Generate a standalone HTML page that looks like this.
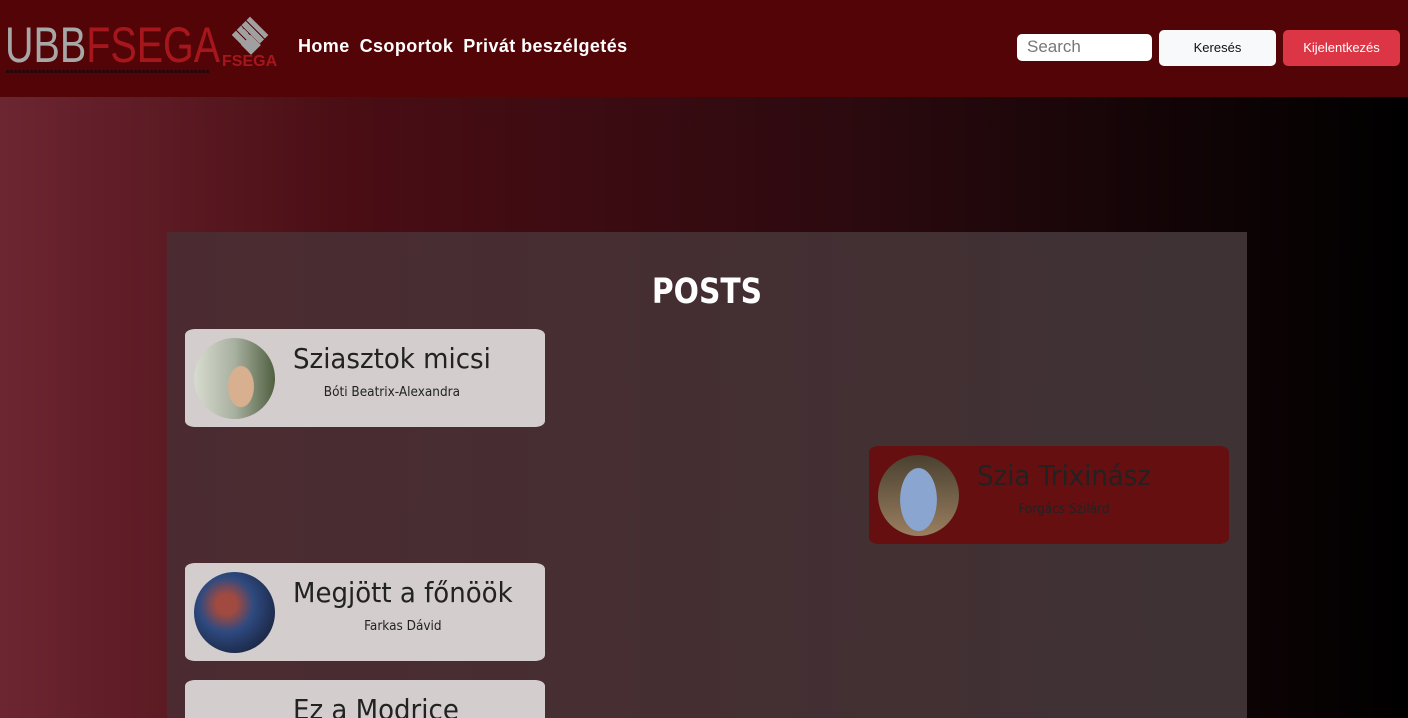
<!DOCTYPE html>
<html><head><meta charset="utf-8"><style>
*{margin:0;padding:0;box-sizing:border-box}
html,body{width:1408px;height:718px;overflow:hidden}
body{font-family:"Liberation Sans","DejaVu Sans",sans-serif;background:linear-gradient(90deg,#6c2631 0%,#4a0d14 25%,#2c0a0f 60%,#000 100%);position:relative}
.hdr{position:absolute;left:0;top:0;width:1408px;height:97px;background:#530406}
.logo{position:absolute;left:5px;top:17px;font-size:50px;white-space:nowrap;transform:scaleX(.79);transform-origin:left;line-height:56px}
.tag{position:absolute;left:6px;top:70px;width:204px;height:3px;background:repeating-linear-gradient(90deg,#2a0406 0 3px,transparent 3px 4px)}
.nav{position:absolute;left:298px;top:36px;color:#fff;font-size:18px;font-weight:bold;letter-spacing:.4px;white-space:nowrap}
.nav span{margin-right:10px}
.search{position:absolute;left:1017px;top:34px;width:135px;height:27px;background:#fff;border-radius:5px;color:#777;font-size:17px;padding:3px 10px}
.btn1{position:absolute;left:1159px;top:30px;width:117px;height:36px;background:#f8f9fa;border-radius:5px;font-size:13px;text-align:center;line-height:36px;color:#111}
.btn2{position:absolute;left:1283px;top:30px;width:117px;height:36px;background:#dc3545;border-radius:5px;font-size:13px;text-align:center;line-height:36px;color:#fff}
.panel{position:absolute;left:167px;top:232px;width:1080px;height:486px;overflow:hidden;background:linear-gradient(90deg,#4b2b31,#3e3234)}
h1{position:absolute;left:0;width:1080px;top:40px;text-align:center;color:#fff;font-size:35px;font-family:"DejaVu Sans",sans-serif;font-weight:bold;transform:scaleX(.85)}
.card{position:absolute;width:360px;height:98px;background:#d3cdcd;border-radius:10px/6px;overflow:hidden}
.av{position:absolute;left:9px;top:9px;width:81px;height:81px;border-radius:50%}
.tx{position:absolute;left:108px;top:11px;text-align:center;color:#222;transform:scaleX(.93);transform-origin:left}
.t{font-size:28px;font-family:"DejaVu Sans",sans-serif;white-space:nowrap;line-height:38px}
.s{font-size:13px;margin-top:7px;font-family:"DejaVu Sans",sans-serif}
</style></head><body>
<div class="hdr">
<div class="logo"><span style="color:#a7a7a7">UBB</span><span style="color:#a5171d">FSEGA</span></div>
<div class="tag"></div>
<div style="position:absolute;left:237px;top:22px;width:26px;height:26px;transform:rotate(45deg);background:repeating-linear-gradient(0deg,#a0a0a0 0 6px,#530406 6px 7px)"></div>
<div style="position:absolute;left:244px;top:38px;width:14px;height:14px;transform:rotate(45deg);background:#a0a0a0"></div>
<div style="position:absolute;left:222px;top:53px;font-size:16px;font-weight:bold;color:#a5171d">FSEGA</div>
<div class="nav"><span>Home</span><span>Csoportok</span><span>Privát beszélgetés</span></div>
<div class="search">Search</div>
<div class="btn1">Keresés</div>
<div class="btn2">Kijelentkezés</div>
</div>
<div class="panel">
<h1>POSTS</h1>
<div class="card" style="left:18px;top:97px"><div class="av" style="background:radial-gradient(ellipse 22% 35% at 58% 60%,#d8b090 0 70%,transparent 75%),linear-gradient(90deg,#d8dcd0,#a8b0a0 50%,#506040)"></div><div class="tx"><div class="t">Sziasztok micsi</div><div class="s">Bóti Beatrix-Alexandra</div></div></div>
<div class="card" style="left:702px;top:214px;background:#650f10"><div class="av" style="background:radial-gradient(ellipse 28% 48% at 50% 55%,#8aa6d0 0 80%,transparent 82%),linear-gradient(#4a4030,#9a7f60)"></div><div class="tx"><div class="t">Szia Trixinász</div><div class="s">Forgács Szilárd</div></div></div>
<div class="card" style="left:18px;top:331px"><div class="av" style="background:radial-gradient(circle at 40% 40%,#a04a40 0 15%,#2e4a80 40%,#1a2440 80%)"></div><div class="tx"><div class="t">Megjött a főnöök</div><div class="s">Farkas Dávid</div></div></div>
<div class="card" style="left:18px;top:448px"><div class="tx"><div class="t">Ez a Modrice</div></div></div>
</div>
</body></html>
